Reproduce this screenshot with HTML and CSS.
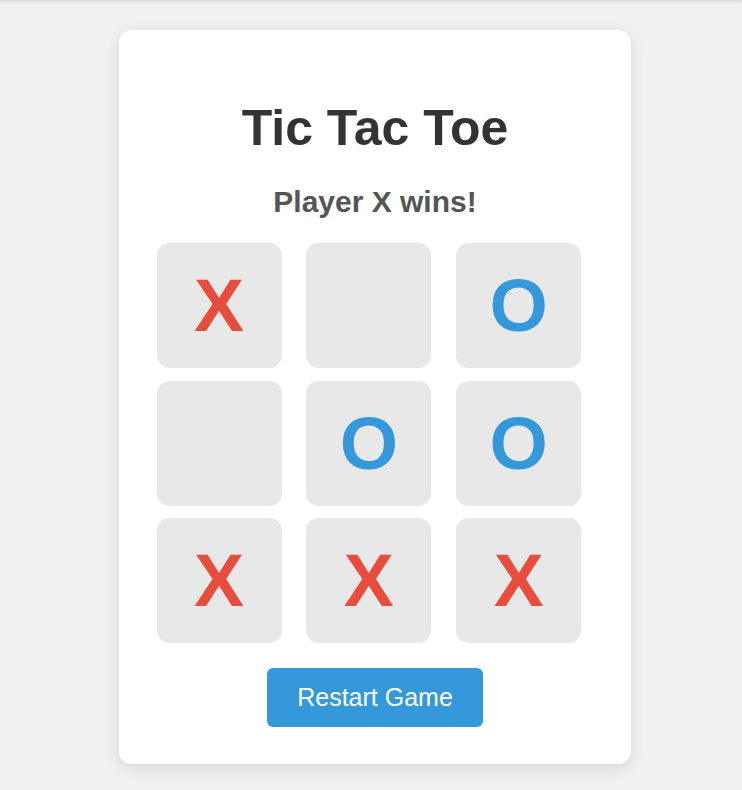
FILE: index.html
```html
<!DOCTYPE html>
<html lang="en">
<head>
<meta charset="utf-8">
<title>Tic Tac Toe</title>
<link rel="stylesheet" href="styles.css">
</head>
<body>
  <main class="card">
    <h1 class="title">Tic Tac Toe</h1>
    <div class="status">Player X wins!</div>
    <div class="board">
      <div class="cell x">X</div>
      <div class="cell"></div>
      <div class="cell o">O</div>
      <div class="cell"></div>
      <div class="cell o">O</div>
      <div class="cell o">O</div>
      <div class="cell x">X</div>
      <div class="cell x">X</div>
      <div class="cell x">X</div>
    </div>
    <button class="restart" type="button">Restart Game</button>
  </main>
</body>
</html>
```

FILE: styles.css
```css
html, body {
  margin: 0;
  padding: 0;
}

body {
  background: linear-gradient(to bottom, #d9d9d9 0, #e8e8e8 2px, #f0f0f0 4px) #f0f0f0;
  font-family: "Liberation Sans", Arial, sans-serif;
  padding: 30px 0 0 8px;
  min-height: 790px;
  box-sizing: border-box;
}

.card {
  width: 512px;
  box-sizing: border-box;
  margin: 0 auto;
  background: #fff;
  border-radius: 12.5px;
  padding: 37.5px;
  box-shadow: 0 4px 14px rgba(0, 0, 0, 0.1);
  display: flex;
  flex-direction: column;
  align-items: center;
}

.title {
  margin: 32.5px 0 0;
  font-size: 50px;
  line-height: 57.5px;
  font-weight: bold;
  color: #333;
}

.status {
  margin-top: 27px;
  font-size: 30px;
  font-weight: bold;
  color: #555;
  line-height: 34.5px;
}

.board {
  margin-top: 24px;
  align-self: stretch;
  display: grid;
  grid-template-columns: repeat(3, 1fr);
  gap: 12.5px;
  justify-items: start;
}

.cell {
  width: 125px;
  height: 125px;
  background: #e8e8e8;
  border-radius: 12.5px;
  display: flex;
  align-items: center;
  justify-content: center;
  font-size: 75px;
  font-weight: bold;
  line-height: 1.15;
}

.cell.x {
  color: #e74c3c;
}

.cell.o {
  color: #3498db;
}

.restart {
  margin-top: 25px;
  font-family: "Liberation Sans", Arial, sans-serif;
  font-size: 25px;
  line-height: 28.75px;
  padding: 15px 30px;
  color: #fff;
  background: #3498db;
  border: none;
  border-radius: 6.25px;
  cursor: pointer;
}
```
